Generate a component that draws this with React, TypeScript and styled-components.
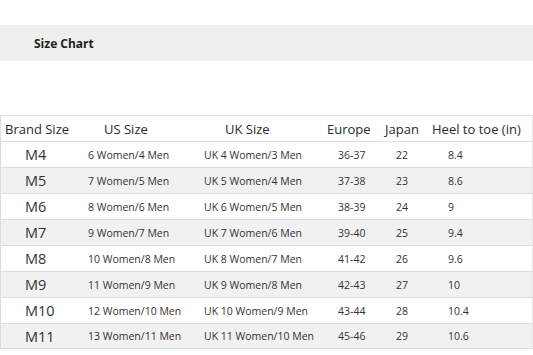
import styled, { createGlobalStyle } from "styled-components";

const GlobalStyle = createGlobalStyle`
  body {
    margin: 0;
    background: #fff;
    font-family: "Open Sans", "Liberation Sans", sans-serif;
    color: #2b2b2b;
  }
`;

type Col = { width: number; headPad: number; bodyPad: number };

const cols: Col[] = [
  { width: 76, headPad: 4, bodyPad: 24 },
  { width: 114, headPad: 27, bodyPad: 11 },
  { width: 128, headPad: 34, bodyPad: 13 },
  { width: 60, headPad: 8, bodyPad: 19 },
  { width: 46, headPad: 6, bodyPad: 17 },
  { width: 109, headPad: 7, bodyPad: 23 },
];

const headers = ["Brand Size", "US Size", "UK Size", "Europe", "Japan", "Heel to toe (in)"];

const rows = [
  ["M4", "6 Women/4 Men", "UK 4 Women/3 Men", "36-37", "22", "8.4"],
  ["M5", "7 Women/5 Men", "UK 5 Women/4 Men", "37-38", "23", "8.6"],
  ["M6", "8 Women/6 Men", "UK 6 Women/5 Men", "38-39", "24", "9"],
  ["M7", "9 Women/7 Men", "UK 7 Women/6 Men", "39-40", "25", "9.4"],
  ["M8", "10 Women/8 Men", "UK 8 Women/7 Men", "41-42", "26", "9.6"],
  ["M9", "11 Women/9 Men", "UK 9 Women/8 Men", "42-43", "27", "10"],
  ["M10", "12 Women/10 Men", "UK 10 Women/9 Men", "43-44", "28", "10.4"],
  ["M11", "13 Women/11 Men", "UK 11 Women/10 Men", "45-46", "29", "10.6"],
];

const Page = styled.div`
  padding-top: 25px;
`;

const Banner = styled.div`
  height: 36px;
  background: #efefee;
  display: flex;
  align-items: center;
  padding-left: 34px;
  font-size: 12px;
  font-weight: 700;
  color: #1f1f1f;
`;

const Table = styled.div`
  margin-top: 54px;
  border-left: 1px solid #dcdcdc;
  border-right: 1px solid #e6e6e6;
`;

const Row = styled.div<{ $shade?: boolean }>`
  display: grid;
  grid-template-columns: ${cols.map((c) => `${c.width}px`).join(" ")};
  height: 26px;
  align-items: center;
  background: ${(p) => (p.$shade ? "#f1f1f1" : "#fff")};
  border-top: 1px solid #dedede;
  box-sizing: border-box;
  &:last-child {
    border-bottom: 1px solid #dedede;
  }
`;

const HeadCell = styled.div<{ $pad: number }>`
  padding-left: ${(p) => p.$pad}px;
  font-size: 13px;
  white-space: nowrap;
  color: #2a2a2a;
`;

const Cell = styled.div<{ $pad: number; $big?: boolean }>`
  padding-left: ${(p) => p.$pad}px;
  font-size: ${(p) => (p.$big ? "14.5px" : "10.5px")};
  white-space: nowrap;
  color: #333;
`;

export default function App() {
  return (
    <Page>
      <GlobalStyle />
      <Banner>Size Chart</Banner>
      <Table>
        <Row>
          {headers.map((h, i) => (
            <HeadCell key={h} $pad={cols[i].headPad}>
              {h}
            </HeadCell>
          ))}
        </Row>
        {rows.map((r, ri) => (
          <Row key={r[0]} $shade={ri % 2 === 1}>
            {r.map((v, i) => (
              <Cell key={i} $pad={cols[i].bodyPad} $big={i === 0}>
                {v}
              </Cell>
            ))}
          </Row>
        ))}
      </Table>
    </Page>
  );
}
